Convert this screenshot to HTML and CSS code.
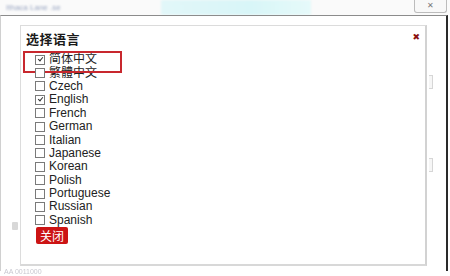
FILE: index.html
```html
<!DOCTYPE html>
<html>
  <head>
    <title>选择语言</title>
    <meta charset="UTF-8" />
    <link rel="stylesheet" href="styles.css">
  </head>
  <body>
    <div class="top">
      <span class="top-text">Ithaca Lane .se</span>
      <span class="top-glow"></span>
      <span class="top-close">&#x2715;</span>
    </div>
    <div class="window">
      <span class="side-icon"></span>
      <span class="grip grip-1"></span>
      <span class="grip grip-2"></span>
      <div class="dialog">
        <div class="dialog-head">
          <h1>选择语言</h1>
          <span class="x">&#x2716;</span>
        </div>
        <div class="mark"></div>
        <ul class="langs">
          <li><span class="box on"></span>简体中文</li>
          <li><span class="box"></span>繁體中文</li>
          <li><span class="box"></span>Czech</li>
          <li><span class="box on"></span>English</li>
          <li><span class="box"></span>French</li>
          <li><span class="box"></span>German</li>
          <li><span class="box"></span>Italian</li>
          <li><span class="box"></span>Japanese</li>
          <li><span class="box"></span>Korean</li>
          <li><span class="box"></span>Polish</li>
          <li><span class="box"></span>Portuguese</li>
          <li><span class="box"></span>Russian</li>
          <li><span class="box"></span>Spanish</li>
        </ul>
        <button type="button" class="btn">关闭</button>
      </div>
      <div class="foot">AA 0011000</div>
    </div>
  </body>
</html>
```

FILE: styles.css
```css
html,
body {
  margin: 0;
  padding: 0;
  width: 450px;
  height: 276px;
  overflow: hidden;
  background: #fff;
  font-family: "Liberation Sans", "Noto Sans CJK SC", sans-serif;
}
.top {
  position: relative;
  height: 15px;
  display: flex;
  align-items: center;
  background: #fafafa;
}
.top-text {
  margin-left: 6px;
  font-size: 8px;
  color: #9aa6c2;
  filter: blur(0.8px);
}
.top-glow {
  width: 150px;
  height: 15px;
  margin-left: 100px;
  background: linear-gradient(90deg, #e2f7f9, #d8f6f8 60%, #e6fafa);
  filter: blur(1px);
}
.top-close {
  margin-left: auto;
  margin-right: 3px;
  width: 31px;
  height: 13px;
  margin-top: -3px;
  border: 1px solid #bcbcbc;
  border-top: 0;
  border-radius: 0 0 3px 3px;
  background: #f8f8f8;
  color: #777;
  font-size: 8px;
  line-height: 13px;
  text-align: center;
}
.window {
  position: relative;
  height: 256px;
  border-top: 1px solid #8c8c8c;
  border-left: 1px solid #d0d0d0;
  border-right: 2px solid #2a2a2a;
  margin-right: 2px;
  padding: 9px 0 0 19px;
  box-sizing: border-box;
}
.side-icon {
  position: absolute;
  left: 11px;
  top: 206px;
  width: 6px;
  height: 8px;
  background: #d8d8d8;
  border-radius: 1px;
}
.grip {
  position: absolute;
  left: 428px;
  width: 3px;
  height: 12px;
  border: 1px solid #d6d6d6;
  border-left: 0;
  background: #f6f6f6;
}
.grip-1 {
  top: 59px;
}
.grip-2 {
  top: 142px;
}
.dialog {
  position: relative;
  width: 407px;
  height: 241px;
  border: 1px solid #dcdcdc;
  border-right: 2px solid #d2d2d2;
  border-bottom: 2px solid #d8d8d8;
  box-sizing: border-box;
  padding: 3px 0 0 5px;
}
.dialog-head {
  display: flex;
  align-items: center;
  height: 18px;
}
h1 {
  margin: 0;
  font-size: 13px;
  font-weight: bold;
  color: #1a1a1a;
  letter-spacing: 0.5px;
}
.x {
  margin-left: auto;
  margin-right: 5px;
  margin-top: -2px;
  color: #8b1010;
  font-size: 9px;
  font-family: "DejaVu Sans", sans-serif;
}
.mark {
  position: absolute;
  left: 2px;
  top: 25px;
  width: 99px;
  height: 22px;
  border: 2px solid #c8282e;
  box-sizing: border-box;
}
.langs {
  list-style: none;
  margin: 6px 0 0 9px;
  padding: 0;
}
.langs li {
  display: flex;
  align-items: center;
  height: 13.4px;
  line-height: 13px;
  font-size: 12px;
  color: #222;
}
.box {
  width: 8px;
  height: 8px;
  border: 1px solid #7a7a7a;
  margin-right: 4px;
  background: #fff;
  position: relative;
  flex: none;
}
.box.on::after {
  content: "";
  position: absolute;
  left: 2.5px;
  top: 0.5px;
  width: 2px;
  height: 4px;
  border: solid #333;
  border-width: 0 1.5px 1.5px 0;
  transform: rotate(40deg);
}
.btn {
  margin: 0 0 0 10px;
  padding: 0 4px;
  height: 17px;
  border: 0;
  border-radius: 2px;
  background: #cc1414;
  color: #fff;
  font-family: "Noto Sans CJK SC", sans-serif;
  font-size: 12px;
  line-height: 17px;
}
.foot {
  margin: 2px 0 0 -16px;
  font-size: 7px;
  color: #c8c8d0;
  filter: blur(0.5px);
}
```
